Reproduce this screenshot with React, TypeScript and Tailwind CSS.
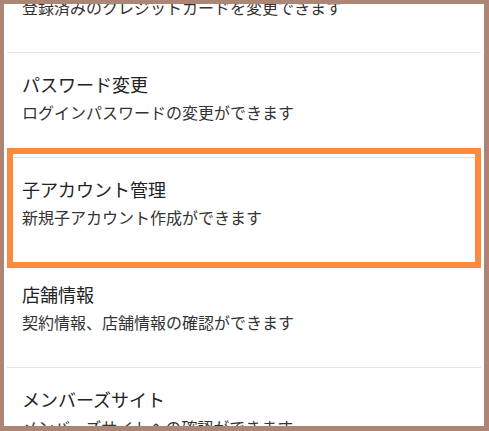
const items = [
  { title: 'クレジットカード変更', desc: '登録済みのクレジットカードを変更できます' },
  { title: 'パスワード変更', desc: 'ログインパスワードの変更ができます' },
  { title: '子アカウント管理', desc: '新規子アカウント作成ができます', active: true },
  { title: '店舗情報', desc: '契約情報、店舗情報の確認ができます' },
  { title: 'メンバーズサイト', desc: 'メンバーズサイトへの確認ができます' },
];

export default function App() {
  return (
    <div
      className="h-[431px] w-[489px] overflow-hidden border-l-4 border-t-4 border-r-[5px] border-b-[5px] border-[#ad8574] bg-white"
      style={{ fontFamily: '"Noto Sans CJK JP", "Noto Sans", sans-serif' }}
    >
      <ul className="-mt-[56px] px-[3px]">
        {items.map((item) => (
          <li
            key={item.title}
            className="relative h-[105px] border-b border-[#e4e4e4] pl-[15px] pt-[21px]"
          >
            <div className="text-[18px] leading-[20px] text-[#222]">{item.title}</div>
            <div className="mt-[8px] text-[16px] leading-[20px] text-[#333]">{item.desc}</div>
            {item.active && (
              <div className="pointer-events-none absolute left-0 right-0 -top-[10px] -bottom-[6px] border-[6px] border-[#fd8a3e]" />
            )}
          </li>
        ))}
      </ul>
    </div>
  );
}
